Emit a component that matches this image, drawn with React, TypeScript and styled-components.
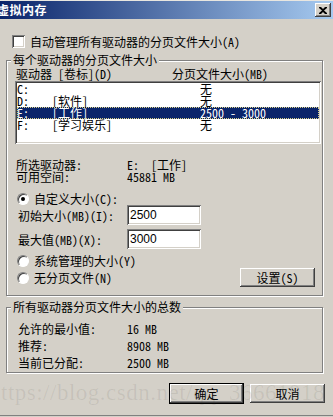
import styled, { createGlobalStyle } from "styled-components";

const GlobalStyle = createGlobalStyle`
  html, body {
    margin: 0;
    padding: 0;
    background: #d4d0c8;
  }
  body {
    font-family: "Noto Sans CJK SC", "DejaVu Sans", sans-serif;
    font-size: 12px;
    font-feature-settings: "hwid" 1;
    color: #000;
  }
`;

const drives = [
  { letter: "C:", label: "", size: "无" },
  { letter: "D:", label: "[软件]", size: "无" },
  { letter: "E:", label: "[工作]", size: "2500 - 3000", selected: true },
  { letter: "F:", label: "[学习娱乐]", size: "无" },
];

function App() {
  return (
    <>
      <GlobalStyle />
      <Window>
        <TitleBar>
          <Title>虚拟内存</Title>
          <CloseButton>
            <svg width="8" height="7" viewBox="0 0 8 7">
              <path d="M0 0h2l2 2 2-2h2v1L5 3.5 8 6v1H6L4 5 2 7H0V6l3-2.5L0 1z" fill="#000" />
            </svg>
          </CloseButton>
        </TitleBar>

        <Body>
          <CheckRow>
            <CheckBox />
            <span>自动管理所有驱动器的分页文件大小(A)</span>
          </CheckRow>

          <Group>
            <Legend>每个驱动器的分页文件大小</Legend>
            <ListHeader>
              <span>驱动器 [卷标](D)</span>
              <span>分页文件大小(MB)</span>
            </ListHeader>
            <ListBox>
              {drives.map((d) => (
                <DriveRow key={d.letter} $selected={d.selected}>
                  <span>{d.letter}</span>
                  <span>{d.label}</span>
                  <span>{d.size}</span>
                </DriveRow>
              ))}
            </ListBox>

            <InfoGrid>
              <span>所选驱动器:</span>
              <span>E:  [工作]</span>
              <span>可用空间:</span>
              <span>45881 MB</span>
            </InfoGrid>

            <RadioRow $top={10}>
              <Radio $checked />
              <span>自定义大小(C):</span>
            </RadioRow>
            <FieldRow $top={0}>
              <span>初始大小(MB)(I):</span>
              <TextBox>2500</TextBox>
            </FieldRow>
            <FieldRow $top={4}>
              <span>最大值(MB)(X):</span>
              <TextBox>3000</TextBox>
            </FieldRow>
            <RadioRow $top={6}>
              <Radio />
              <span>系统管理的大小(Y)</span>
            </RadioRow>
            <LastRow>
              <RadioRow $top={0}>
                <Radio />
                <span>无分页文件(N)</span>
              </RadioRow>
              <Button>设置(S)</Button>
            </LastRow>
          </Group>

          <TotalGroup>
            <Legend>所有驱动器分页文件大小的总数</Legend>
            <TotalRow>
              <span>允许的最小值:</span>
              <span>16 MB</span>
            </TotalRow>
            <TotalRow>
              <span>推荐:</span>
              <span>8908 MB</span>
            </TotalRow>
            <TotalRow>
              <span>当前已分配:</span>
              <span>2500 MB</span>
            </TotalRow>
          </TotalGroup>

          <ButtonRow>
            <Button $default>确定</Button>
            <Button>取消</Button>
          </ButtonRow>
        </Body>

        <Watermark>https://blog.csdn.net/qq_36661918</Watermark>
      </Window>
    </>
  );
}

const Window = styled.div`
  position: relative;
  width: 333px;
  height: 417px;
  overflow: hidden;
  background: #d4d0c8;
  box-shadow: inset 0 1px 0 #e8e6e0, inset 0 -1px 0 #d4d0c8, inset 0 -2px 0 #808080;
  display: flex;
  flex-direction: column;
`;

const TitleBar = styled.div`
  margin-top: 1px;
  height: 18px;
  background: linear-gradient(to right, #0a246a, #a6caf0);
  display: flex;
  align-items: center;
  justify-content: space-between;
  padding-right: 2px;
`;

const Title = styled.span`
  margin-left: -3px;
  color: #fff;
  font-weight: bold;
  font-size: 12px;
  line-height: 18px;
  letter-spacing: 0.5px;
`;

const CloseButton = styled.div`
  width: 16px;
  height: 14px;
  background: #d4d0c8;
  box-shadow: inset -1px -1px 0 #404040, inset 1px 1px 0 #fff,
    inset -2px -2px 0 #808080, inset 2px 2px 0 #d4d0c8;
  display: flex;
  align-items: center;
  justify-content: center;
  padding-right: 1px;
  box-sizing: border-box;
`;

const Body = styled.div`
  display: flex;
  flex-direction: column;
  padding: 0 10px 0 6px;
`;

const CheckRow = styled.div`
  display: flex;
  align-items: center;
  gap: 5px;
  margin-top: 16px;
  padding-left: 6px;
  height: 13px;
  line-height: 13px;
`;

const CheckBox = styled.div`
  width: 13px;
  height: 13px;
  box-sizing: border-box;
  background: #fff;
  box-shadow: inset 1px 1px 0 #808080, inset -1px -1px 0 #fff,
    inset 2px 2px 0 #404040, inset -2px -2px 0 #d4d0c8;
`;

const Group = styled.fieldset`
  margin: 6px 0 0;
  padding: 1px 1px 8px 8px;
  min-width: 0;
  border: 1px solid #808080;
  box-shadow: inset 1px 1px 0 #fff, 1px 1px 0 #fff;
`;

const TotalGroup = styled(Group)`
  margin-top: 5px;
  padding: 7px 1px 1px 8px;
`;

const Legend = styled.legend`
  margin-left: -4px;
  padding: 0 2px;
  line-height: 12px;
  height: 12px;
  background: #d4d0c8;
`;

const ListHeader = styled.div`
  display: grid;
  grid-template-columns: 156px 1fr;
  padding-left: 1px;
  height: 14px;
  line-height: 14px;
`;

const ListBox = styled.div`
  height: 63px;
  box-sizing: border-box;
  padding: 2px;
  background: #fff;
  box-shadow: inset 1px 1px 0 #808080, inset -1px -1px 0 #fff,
    inset 2px 2px 0 #404040, inset -2px -2px 0 #d4d0c8;
`;

const DriveRow = styled.div<{ $selected?: boolean }>`
  display: grid;
  grid-template-columns: 35px 148px 1fr;
  height: 12px;
  line-height: 12px;
  white-space: pre;
  background: ${(p) => (p.$selected ? "#0a246a" : "transparent")};
  color: ${(p) => (p.$selected ? "#fff" : "#000")};
  outline: ${(p) => (p.$selected ? "1px dotted #d8d088" : "none")};
  outline-offset: -1px;
`;

const InfoGrid = styled.div`
  display: grid;
  grid-template-columns: 111px 1fr;
  grid-auto-rows: 12px;
  line-height: 12px;
  margin-top: 15px;
  padding-left: 1px;
  white-space: pre;
`;

const RadioRow = styled.div<{ $top: number }>`
  display: flex;
  align-items: center;
  gap: 5px;
  margin-top: ${(p) => p.$top}px;
  padding-left: 2px;
  height: 12px;
  line-height: 12px;
`;

const Radio = styled.div<{ $checked?: boolean }>`
  width: 12px;
  height: 12px;
  border-radius: 50%;
  box-sizing: border-box;
  background: #fff;
  border: 1px solid;
  border-color: #808080 #fff #fff #808080;
  box-shadow: inset 1px 1px 0 #404040;
  display: flex;
  align-items: center;
  justify-content: center;

  &::after {
    content: "";
    width: 4px;
    height: 4px;
    border-radius: 50%;
    background: #000;
    display: ${(p) => (p.$checked ? "block" : "none")};
  }
`;

const FieldRow = styled.div<{ $top: number }>`
  display: grid;
  grid-template-columns: 109px 74px;
  align-items: center;
  margin-top: ${(p) => p.$top}px;
  padding-left: 3px;
  height: 20px;
`;

const TextBox = styled.div`
  height: 20px;
  box-sizing: border-box;
  padding: 0 3px;
  background: #fff;
  font-family: "Liberation Sans", sans-serif;
  font-size: 12px;
  line-height: 20px;
  box-shadow: inset 1px 1px 0 #808080, inset -1px -1px 0 #fff,
    inset 2px 2px 0 #404040, inset -2px -2px 0 #d4d0c8;
`;

const LastRow = styled.div`
  display: flex;
  align-items: center;
  justify-content: space-between;
  margin-top: 1px;
  padding-right: 6px;
`;

const Button = styled.div<{ $default?: boolean }>`
  width: 75px;
  height: ${(p) => (p.$default ? "21px" : "19px")};
  box-sizing: border-box;
  display: flex;
  align-items: center;
  justify-content: center;
  background: #d4d0c8;
  border: ${(p) => (p.$default ? "1px solid #000" : "none")};
  box-shadow: inset -1px -1px 0 #404040, inset 1px 1px 0 #fff,
    inset -2px -2px 0 #808080, inset 2px 2px 0 #d4d0c8;
  line-height: 12px;
`;

const TotalRow = styled.div`
  display: grid;
  grid-template-columns: 109px 1fr;
  padding-left: 3px;
  height: 17px;
  line-height: 17px;
`;

const ButtonRow = styled.div`
  display: flex;
  justify-content: flex-end;
  align-items: center;
  gap: 6px;
  margin-top: 10px;
  margin-right: -2px;
  height: 21px;
`;

const Watermark = styled.div`
  position: absolute;
  left: -11px;
  top: 380px;
  font-family: "Liberation Serif", serif;
  font-size: 23px;
  line-height: 26px;
  letter-spacing: 0.5px;
  white-space: nowrap;
  color: rgba(60, 50, 40, 0.09);
  pointer-events: none;
`;

export default App;
